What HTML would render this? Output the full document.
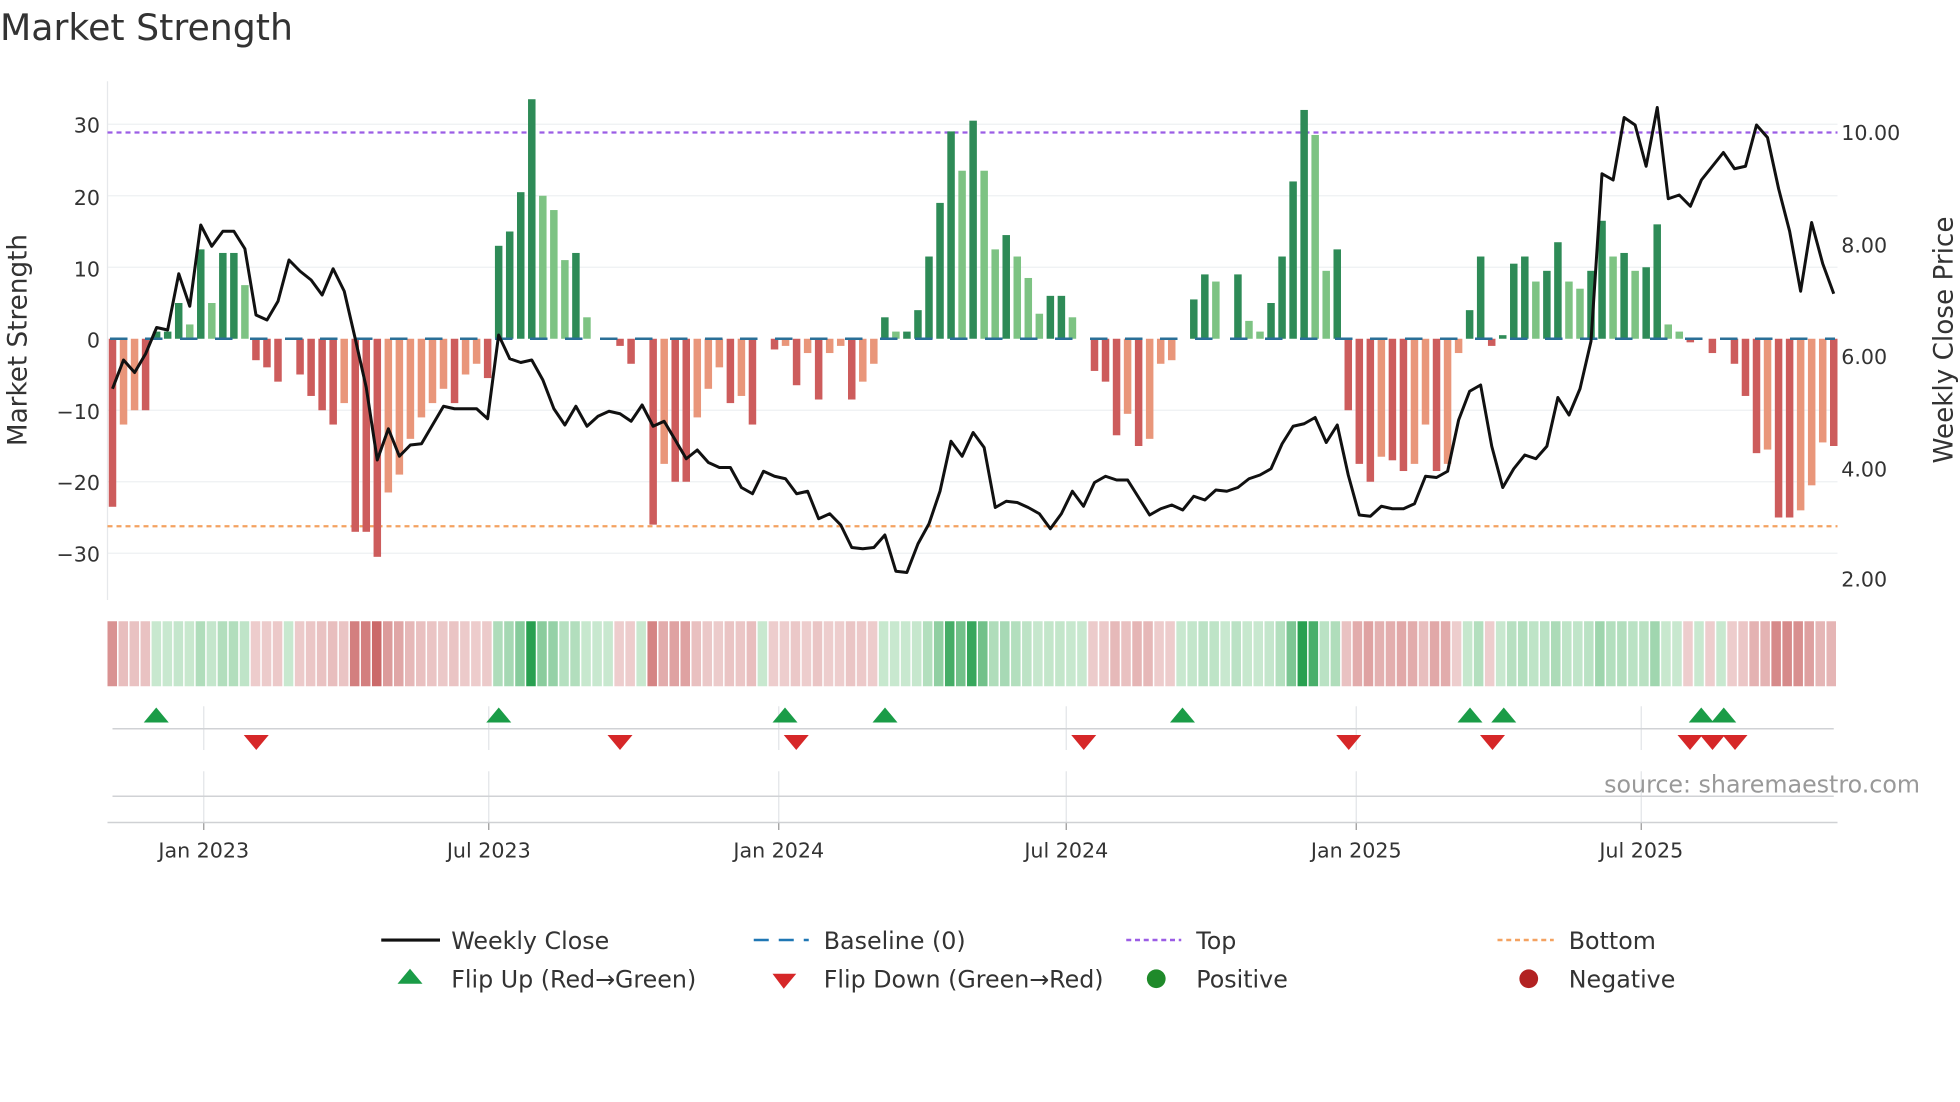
<!DOCTYPE html>
<html><head><meta charset="utf-8"><style>
html,body{margin:0;padding:0;background:#fff;}
svg{display:block;font-family:"DejaVu Sans","Liberation Sans",sans-serif;}
</style></head><body>
<svg id="s" width="1960" height="1102" viewBox="0 0 1568 881.6" xmlns="http://www.w3.org/2000/svg">
<text x="0" y="32" font-size="29" fill="#333">Market Strength</text>
<g id="grid"></g>
<g id="bars"></g>
<g id="heat"></g>
<g id="marks"></g>
<g font-size="16.5" fill="#333">
<text x="80" y="106" text-anchor="end">30</text>
<text x="80" y="164" text-anchor="end">20</text>
<text x="80" y="221" text-anchor="end">10</text>
<text x="80" y="278" text-anchor="end">0</text>
<text x="80" y="335" text-anchor="end">−10</text>
<text x="80" y="392" text-anchor="end">−20</text>
<text x="80" y="449" text-anchor="end">−30</text>
<text x="1473" y="112">10.00</text>
<text x="1473" y="202">8.00</text>
<text x="1473" y="291">6.00</text>
<text x="1473" y="381">4.00</text>
<text x="1473" y="469">2.00</text>
</g>
<text transform="translate(21,272) rotate(-90)" font-size="21" fill="#333" text-anchor="middle">Market Strength</text>
<text transform="translate(1562,272) rotate(-90)" font-size="21" fill="#333" text-anchor="middle">Weekly Close Price</text>
<g font-size="16.5" fill="#333" text-anchor="middle">
<text x="163" y="686">Jan 2023</text>
<text x="391" y="686">Jul 2023</text>
<text x="623" y="686">Jan 2024</text>
<text x="853" y="686">Jul 2024</text>
<text x="1085" y="686">Jan 2025</text>
<text x="1313" y="686">Jul 2025</text>
</g>
<text x="1536" y="634" font-size="19" fill="#999" text-anchor="end">source: sharemaestro.com</text>
<g font-size="19" fill="#333">
<line x1="305" y1="752" x2="352" y2="752" stroke="#111" stroke-width="2.5"/>
<text x="361" y="759">Weekly Close</text>
<line x1="603" y1="752" x2="647" y2="752" stroke="#1f77b4" stroke-width="2" stroke-dasharray="12,8"/>
<text x="659" y="759">Baseline (0)</text>
<line x1="901" y1="752" x2="945" y2="752" stroke="#9b5de5" stroke-width="2" stroke-dasharray="4,3"/>
<text x="957" y="759">Top</text>
<line x1="1198" y1="752" x2="1243" y2="752" stroke="#f4a261" stroke-width="2" stroke-dasharray="4,3"/>
<text x="1255" y="759">Bottom</text>
<polygon points="328,775 338,787 318,787" fill="#1a9c47"/>
<text x="361" y="790">Flip Up (Red→Green)</text>
<polygon points="618,779 637,779 627,791" fill="#d62728"/>
<text x="659" y="790">Flip Down (Green→Red)</text>
<circle cx="925" cy="783" r="7.5" fill="#1f8a2a"/>
<text x="957" y="790">Positive</text>
<circle cx="1223" cy="783" r="7.5" fill="#b22222"/>
<text x="1255" y="790">Negative</text>
</g>
</svg>
<script>
var NS="http://www.w3.org/2000/svg";
function el(p,t,a){var e=document.createElementNS(NS,t);for(var k in a)e.setAttribute(k,a[k]);document.getElementById(p).appendChild(e);return e;}
var V=[-23.5,-12,-10,-10,1,1,5,2,12.5,5,12,12,7.5,-3,-4,-6,0,-5,-8,-10,-12,-9,-27,-27,-30.5,-21.5,-19,-14,-11,-9,-7,-9,-5,-3.5,-5.5,13,15,20.5,33.5,20,18,11,12,3,0,0,-1,-3.5,0,-26,-17.5,-20,-20,-11,-7,-4,-9,-8,-12,0,-1.5,-1,-6.5,-2,-8.5,-2,-1,-8.5,-6,-3.5,3,1,1,4,11.5,19,29,23.5,30.5,23.5,12.5,14.5,11.5,8.5,3.5,6,6,3,0,-4.5,-6,-13.5,-10.5,-15,-14,-3.5,-3,0,5.5,9,8,0,9,2.5,1,5,11.5,22,32,28.5,9.5,12.5,-10,-17.5,-20,-16.5,-17,-18.5,-17.5,-12,-18.5,-17.5,-2,4,11.5,-1,0.5,10.5,11.5,8,9.5,13.5,8,7,9.5,16.5,11.5,12,9.5,10,16,2,1,-0.5,0,-2,0,-3.5,-8,-16,-15.5,-25,-25,-24,-20.5,-14.5,-15];
var L=[311,288,298,283,262,264,219,245,180,197,185,185,199,252,256,241,208,217,224,236,215,233,271,310,368,343,365,356,355,340,325,327,327,327,335,268,287,290,288,304,327,340,325,341,333,329,331,337,324,341,337,352,367,360,370,374,374,390,395,377,381,383,395,393,415,411,420,438,439,438,428,457,458,435,419,393,353,365,346,358,406,401,402,406,411,423,411,393,405,386,381,384,384,398,412,407,404,408,397,400,392,393,390,383,380,375,355,341,339,334,354,340,380,412,413,405,407,407,403,381,382,377,336,313,308,357,390,375,364,367,357,318,332,311,273,139,144,94,100,133,86,159,156,165,144,133,122,135,133,100,110,151,185,233,178,211,235];
var n=V.length,x0=90,dx=(1467-90)/(n-1),z=271,sc=5.72;
[-30,-20,-10,10,20,30].forEach(function(v){el("grid","line",{x1:86,x2:1470,y1:z-v*sc,y2:z-v*sc,stroke:"#eef0f3","stroke-width":1});});
el("grid","line",{x1:86,x2:86,y1:65,y2:480,stroke:"#e6e8eb","stroke-width":1});
el("grid","line",{x1:86,x2:1470,y1:106,y2:106,stroke:"#9b5de5","stroke-width":1.8,"stroke-dasharray":"4,3.2"});
el("grid","line",{x1:86,x2:1470,y1:421,y2:421,stroke:"#f4a261","stroke-width":1.8,"stroke-dasharray":"4,3.2"});
var hw=(1470-86)/n;
for(var i=0;i<n;i++){
 var v=V[i],p=i>0?V[i-1]:0,x=x0+dx*i,w=6;
 var dark=Math.abs(v)>=Math.abs(p)||(v*p<0);
 var c=v>=0?(dark?"#2e8b57":"#7dc383"):(dark?"#cd5c5c":"#e9967a");
 if(Math.abs(v)>0.3){var h=Math.abs(v)*sc;el("bars","rect",{x:x-w/2,y:v>0?z-h:z,width:w,height:h,fill:c});}
 var a=Math.min(1,Math.abs(v)/32),t=0.12+0.88*a*a,hc;
 if(v>=0){hc="rgb("+Math.round(222-(222-40)*t)+","+Math.round(242-(242-160)*t)+","+Math.round(224-(224-80)*t)+")";}
 else{hc="rgb("+Math.round(242-(242-200)*t)+","+Math.round(220-(220-95)*t)+","+Math.round(220-(220-95)*t)+")";}
 el("heat","rect",{x:86+hw*i,y:497,width:hw-1.2,height:52,fill:hc});
}
el("bars","line",{x1:88,x2:1468,y1:z,y2:z,stroke:"#2a6f97","stroke-width":2,"stroke-dasharray":"14,14"});
var pts=L.map(function(y,i){return (x0+dx*i).toFixed(1)+","+y;}).join(" ");
el("bars","polyline",{points:pts,fill:"none",stroke:"#111","stroke-width":2.4,"stroke-linejoin":"round"});
[163,391,623,853,1085,1313].forEach(function(x){el("marks","line",{x1:x,x2:x,y1:565,y2:600,stroke:"#e3e5e8"});el("marks","line",{x1:x,x2:x,y1:617,y2:658,stroke:"#e3e5e8"});el("marks","line",{x1:x,x2:x,y1:658,y2:664,stroke:"#999"});});
el("marks","line",{x1:90,x2:1467,y1:583,y2:583,stroke:"#d0d2d5","stroke-width":1.2});
el("marks","line",{x1:90,x2:1467,y1:637,y2:637,stroke:"#d0d2d5","stroke-width":1.2});
el("marks","line",{x1:86,x2:1470,y1:658,y2:658,stroke:"#cfd1d4","stroke-width":1.2});
[125,399,628,708,946,1176,1203,1361,1379].forEach(function(x){el("marks","polygon",{points:(x)+",566 "+(x+10)+",578 "+(x-10)+",578",fill:"#1a9c47"});});
[205,496,637,867,1079,1194,1352,1370,1388].forEach(function(x){el("marks","polygon",{points:(x-10)+",588 "+(x+10)+",588 "+x+",600",fill:"#d62728"});});
</script>
</body></html>
